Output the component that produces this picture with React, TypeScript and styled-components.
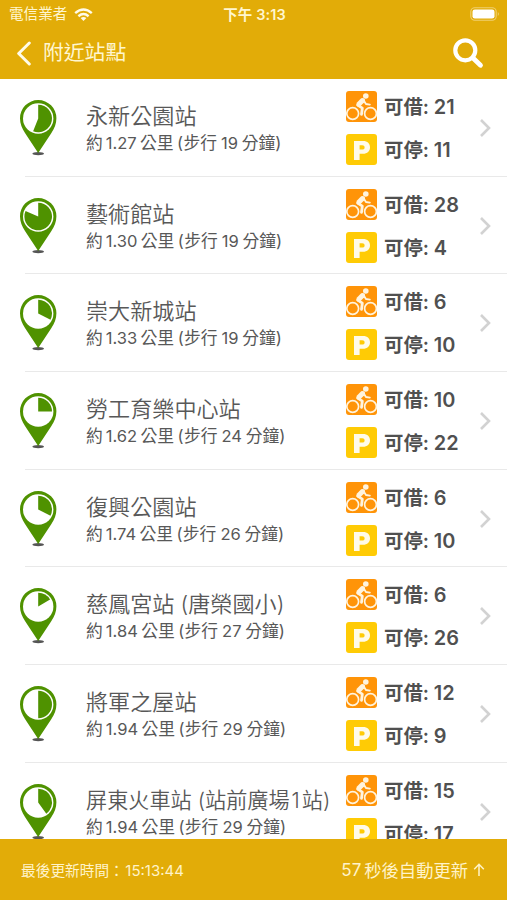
import React from "react";
import styled, { createGlobalStyle } from "styled-components";

const GlobalStyle = createGlobalStyle`
  * { box-sizing: border-box; }
  html, body { margin: 0; background: #fff; overflow: hidden; }
  body { font-family: Inter, "Noto Sans CJK TC", sans-serif; color: #585858; }
`;

const GOLD = "#e2ac08";
const GREEN = "#4f9200";

const Screen = styled.div`
  width: 507px;
  height: 900px;
  display: flex;
  flex-direction: column;
  overflow: hidden;
  background: #fff;
`;

const Header = styled.header`
  flex: none;
  height: 79px;
  background: ${GOLD};
  color: #fff6cf;
`;

const StatusBar = styled.div`
  height: 27px;
  padding: 0 7px 0 9px;
  display: grid;
  grid-template-columns: 1fr auto 1fr;
  align-items: center;
  font-size: 14.6px;
  line-height: 27px;
  white-space: nowrap;
`;

const Carrier = styled.div`
  display: flex;
  align-items: center;
  gap: 7px;
  padding-top: 1px;
`;

const Clock = styled.div`
  font-size: 14.5px;
  font-weight: 600;
  letter-spacing: 0.1px;
`;

const BatterySlot = styled.div`
  display: flex;
  justify-content: flex-end;
`;

const NavBar = styled.nav`
  height: 52px;
  padding: 0 23px 0 16px;
  display: flex;
  align-items: center;
`;

const Title = styled.h1`
  flex: 1;
  margin: 0 0 0 11px;
  font-size: 20.8px;
  font-weight: 400;
  line-height: 52px;
`;

const List = styled.main`
  flex: 1;
  min-height: 0;
  overflow: hidden;
`;

const Row = styled.article`
  height: 97.7px;
  padding-left: 20px;
  display: grid;
  grid-template-columns: 66px 260px 1fr 28px;
  background: linear-gradient(#e9e9e9, #e9e9e9) 25px 100% / 482px 1px no-repeat;
`;

const PinSlot = styled.div`
  padding-top: 21px;
`;

const Info = styled.div`
  padding-top: 22px;
  white-space: nowrap;
`;

const Name = styled.div<{ $size: number }>`
  height: 31px;
  line-height: 31px;
  font-size: ${(p) => p.$size}px;
  font-weight: 350;
`;

const Detail = styled.div`
  height: 23px;
  line-height: 22px;
  font-size: 16.8px;
`;

const Latin = styled.span<{ $before?: number; $after?: number }>`
  font-family: Inter, sans-serif;
  font-size: 0.985em;
  margin-left: ${(p) => p.$before ?? 0}px;
  margin-right: ${(p) => p.$after ?? 0}px;
`;

const Counts = styled.div`
  padding-top: 12px;
  display: flex;
  flex-direction: column;
  gap: 12px;
`;

const Count = styled.div`
  height: 31px;
  display: flex;
  align-items: center;
  gap: 7px;
  font-size: 19.4px;
  font-weight: 600;
  line-height: 31px;
  white-space: nowrap;
  color: #505050;
`;

const CountText = styled.span`
  padding-top: 2px;
`;

const Digits = styled.span`
  font-size: 19.9px;
`;

const ChevronSlot = styled.div`
  padding-top: 39px;
`;

const Footer = styled.footer`
  flex: none;
  height: 61px;
  padding: 0 22px 0 21px;
  display: flex;
  align-items: center;
  justify-content: space-between;
  background: ${GOLD};
  color: #fff3c8;
  white-space: nowrap;
`;

const Updated = styled.div`
  font-size: 14.7px;
`;

const Time = styled.span`
  margin-left: 1.5px;
  font-size: 15px;
`;

const Refresh = styled.div`
  display: flex;
  align-items: center;
  font-size: 17.3px;
`;

const Icon = styled.svg`
  display: block;
  flex: none;
`;

function Pin({ share }: { share: number }) {
  const a = share * Math.PI * 2;
  const x = 18.2 + 13.8 * Math.sin(a);
  const y = 18.5 - 13.8 * Math.cos(a);
  return (
    <Icon width="37" height="56" viewBox="0 0 37 56">
      <ellipse cx="18.2" cy="53.7" rx="5.8" ry="1.6" fill="#555" />
      <path d="M18.2 0A18.2 18.2 0 0 0 0 18.2C0 24 2 28 5 33L18.2 53L31.4 33C34.4 28 36.4 24 36.4 18.2A18.2 18.2 0 0 0 18.2 0Z" fill={GREEN} />
      <circle cx="18.2" cy="18.5" r="15.2" fill="#fff" />
      <path d={`M18.2 18.5V4.7A13.8 13.8 0 ${share > 0.5 ? 1 : 0} 1 ${x} ${y}Z`} fill={GREEN} />
    </Icon>
  );
}

function BikeIcon() {
  return (
    <Icon width="31" height="31" viewBox="0 0 31 31">
      <rect width="31" height="31" rx="3" fill="#ff9408" />
      <g fill="none" stroke="#fff4df" strokeLinecap="round" strokeLinejoin="round">
        <circle cx="6.7" cy="22.5" r="5.9" strokeWidth="1.7" />
        <circle cx="24.5" cy="22.5" r="5.9" strokeWidth="1.7" />
        <path d="M11.8 14.2L16.3 17.2L15.5 23.4" strokeWidth="2.8" />
        <path d="M17.7 9.5L20 13L23.8 13.6" strokeWidth="1.9" />
      </g>
      <path d="M15.2 7.2Q17.4 6.4 18.9 8.3Q19.6 9.8 18.3 11.2L14.8 14.8Q12.4 16.6 10.8 15Q9.6 13.4 11 11.6Z" fill="#fff4df" />
      <circle cx="19.8" cy="5" r="2.8" fill="#fff4df" />
    </Icon>
  );
}

function ParkingIcon() {
  return (
    <Icon width="31" height="31" viewBox="0 0 31 31">
      <rect width="31" height="31" rx="3" fill="#ffcb05" />
      <path
        fillRule="evenodd"
        d="M8 7H17C21.6 7 24 9.5 24 13.3C24 17.4 21.3 19.8 17 19.8H13.6V26H8ZM13.6 11.2V15.6H16.2C17.8 15.6 18.6 14.7 18.6 13.4C18.6 12 17.8 11.2 16.2 11.2Z"
        fill="#fffbe9"
      />
    </Icon>
  );
}

type Station = {
  name: React.ReactNode;
  size?: number;
  km: string;
  minutes: number;
  bikes: number;
  docks: number;
  share: number;
};

const stations: Station[] = [
  { name: "永新公園站", km: "1.27", minutes: 19, bikes: 21, docks: 11, share: 0.56 },
  { name: "藝術館站", km: "1.30", minutes: 19, bikes: 28, docks: 4, share: 0.815 },
  { name: "崇大新城站", km: "1.33", minutes: 19, bikes: 6, docks: 10, share: 0.325 },
  { name: "勞工育樂中心站", km: "1.62", minutes: 24, bikes: 10, docks: 22, share: 0.25 },
  { name: "復興公園站", km: "1.74", minutes: 26, bikes: 6, docks: 10, share: 0.325 },
  { name: "慈鳳宮站 (唐榮國小)", km: "1.84", minutes: 27, bikes: 6, docks: 26, share: 0.165 },
  { name: "將軍之屋站", km: "1.94", minutes: 29, bikes: 12, docks: 9, share: 0.5 },
  {
    name: <>屏東火車站 (站前廣場<Latin $before={2} $after={2}>1</Latin>站)</>,
    size: 21.15, km: "1.94", minutes: 29, bikes: 15, docks: 17, share: 0.4,
  },
];

function StationRow({ s }: { s: Station }) {
  return (
    <Row>
      <PinSlot><Pin share={s.share} /></PinSlot>
      <Info>
        <Name $size={s.size ?? 22.1}>{s.name}</Name>
        <Detail>
          約<Latin $before={3} $after={3.3}>{s.km}</Latin>公里<Latin $before={3.5} $after={0.3}>(</Latin>步行
          <Latin $before={4} $after={3.7}>{s.minutes}</Latin>分鐘)
        </Detail>
      </Info>
      <Counts>
        <Count><BikeIcon /><CountText>可借: <Digits>{s.bikes}</Digits></CountText></Count>
        <Count><ParkingIcon /><CountText>可停: <Digits>{s.docks}</Digits></CountText></Count>
      </Counts>
      <ChevronSlot>
        <Icon width="14" height="20" viewBox="0 0 14 20">
          <path d="M2 2L10 10L2 18" fill="none" stroke="#d2d2d2" strokeWidth="2.6" />
        </Icon>
      </ChevronSlot>
    </Row>
  );
}

export default function App() {
  return (
    <Screen>
      <GlobalStyle />
      <Header>
        <StatusBar>
          <Carrier>
            電信業者
            <Icon width="19" height="14" viewBox="0 0 19 14" fill="none" stroke="#fffbe9" strokeWidth="2.4">
              <path d="M1.2 5.2Q9.5 -2.2 17.8 5.2" />
              <path d="M4.4 8.2Q9.5 4 14.6 8.2" />
              <path d="M6.6 10.1Q9.5 7.8 12.4 10.1L9.5 13Z" fill="#fffbe9" stroke="none" />
            </Icon>
          </Carrier>
          <Clock>下午 3:13</Clock>
          <BatterySlot>
            <Icon width="30" height="14" viewBox="0 0 30 14">
              <rect x="0.8" y="0.8" width="25.4" height="12.4" rx="4" fill="none" stroke="#f0cf70" strokeWidth="1.1" />
              <rect x="2.5" y="2.4" width="22" height="9.2" rx="2.4" fill="#fff" />
              <path d="M27.8 5Q30 7 27.8 9Z" fill="#f0cf70" />
            </Icon>
          </BatterySlot>
        </StatusBar>
        <NavBar>
          <Icon width="16" height="25" viewBox="0 0 16 25">
            <path d="M13.3 2L2.7 12.5L13.3 23" fill="none" stroke="#fffbe9" strokeWidth="3" strokeLinecap="round" strokeLinejoin="round" />
          </Icon>
          <Title>附近站點</Title>
          <Icon width="31" height="31" viewBox="0 0 31 31" fill="none" stroke="#fff" strokeLinecap="round">
            <circle cx="12.3" cy="12.3" r="10" strokeWidth="4.2" />
            <path d="M20 20L27.5 27.3" strokeWidth="4.8" />
          </Icon>
        </NavBar>
      </Header>
      <List>
        {stations.map((s, i) => <StationRow key={i} s={s} />)}
      </List>
      <Footer>
        <Updated>最後更新時間：<Time>15:13:44</Time></Updated>
        <Refresh>
          <Latin $after={3}>57</Latin>秒後自動更新
          <Icon width="17" height="16" viewBox="0 0 17 16" fill="none" stroke="#fff3c8" strokeWidth="1.5">
            <path d="M11 14V2.5M6.2 7.2L11 2.3L15.8 7.2" />
          </Icon>
        </Refresh>
      </Footer>
    </Screen>
  );
}
